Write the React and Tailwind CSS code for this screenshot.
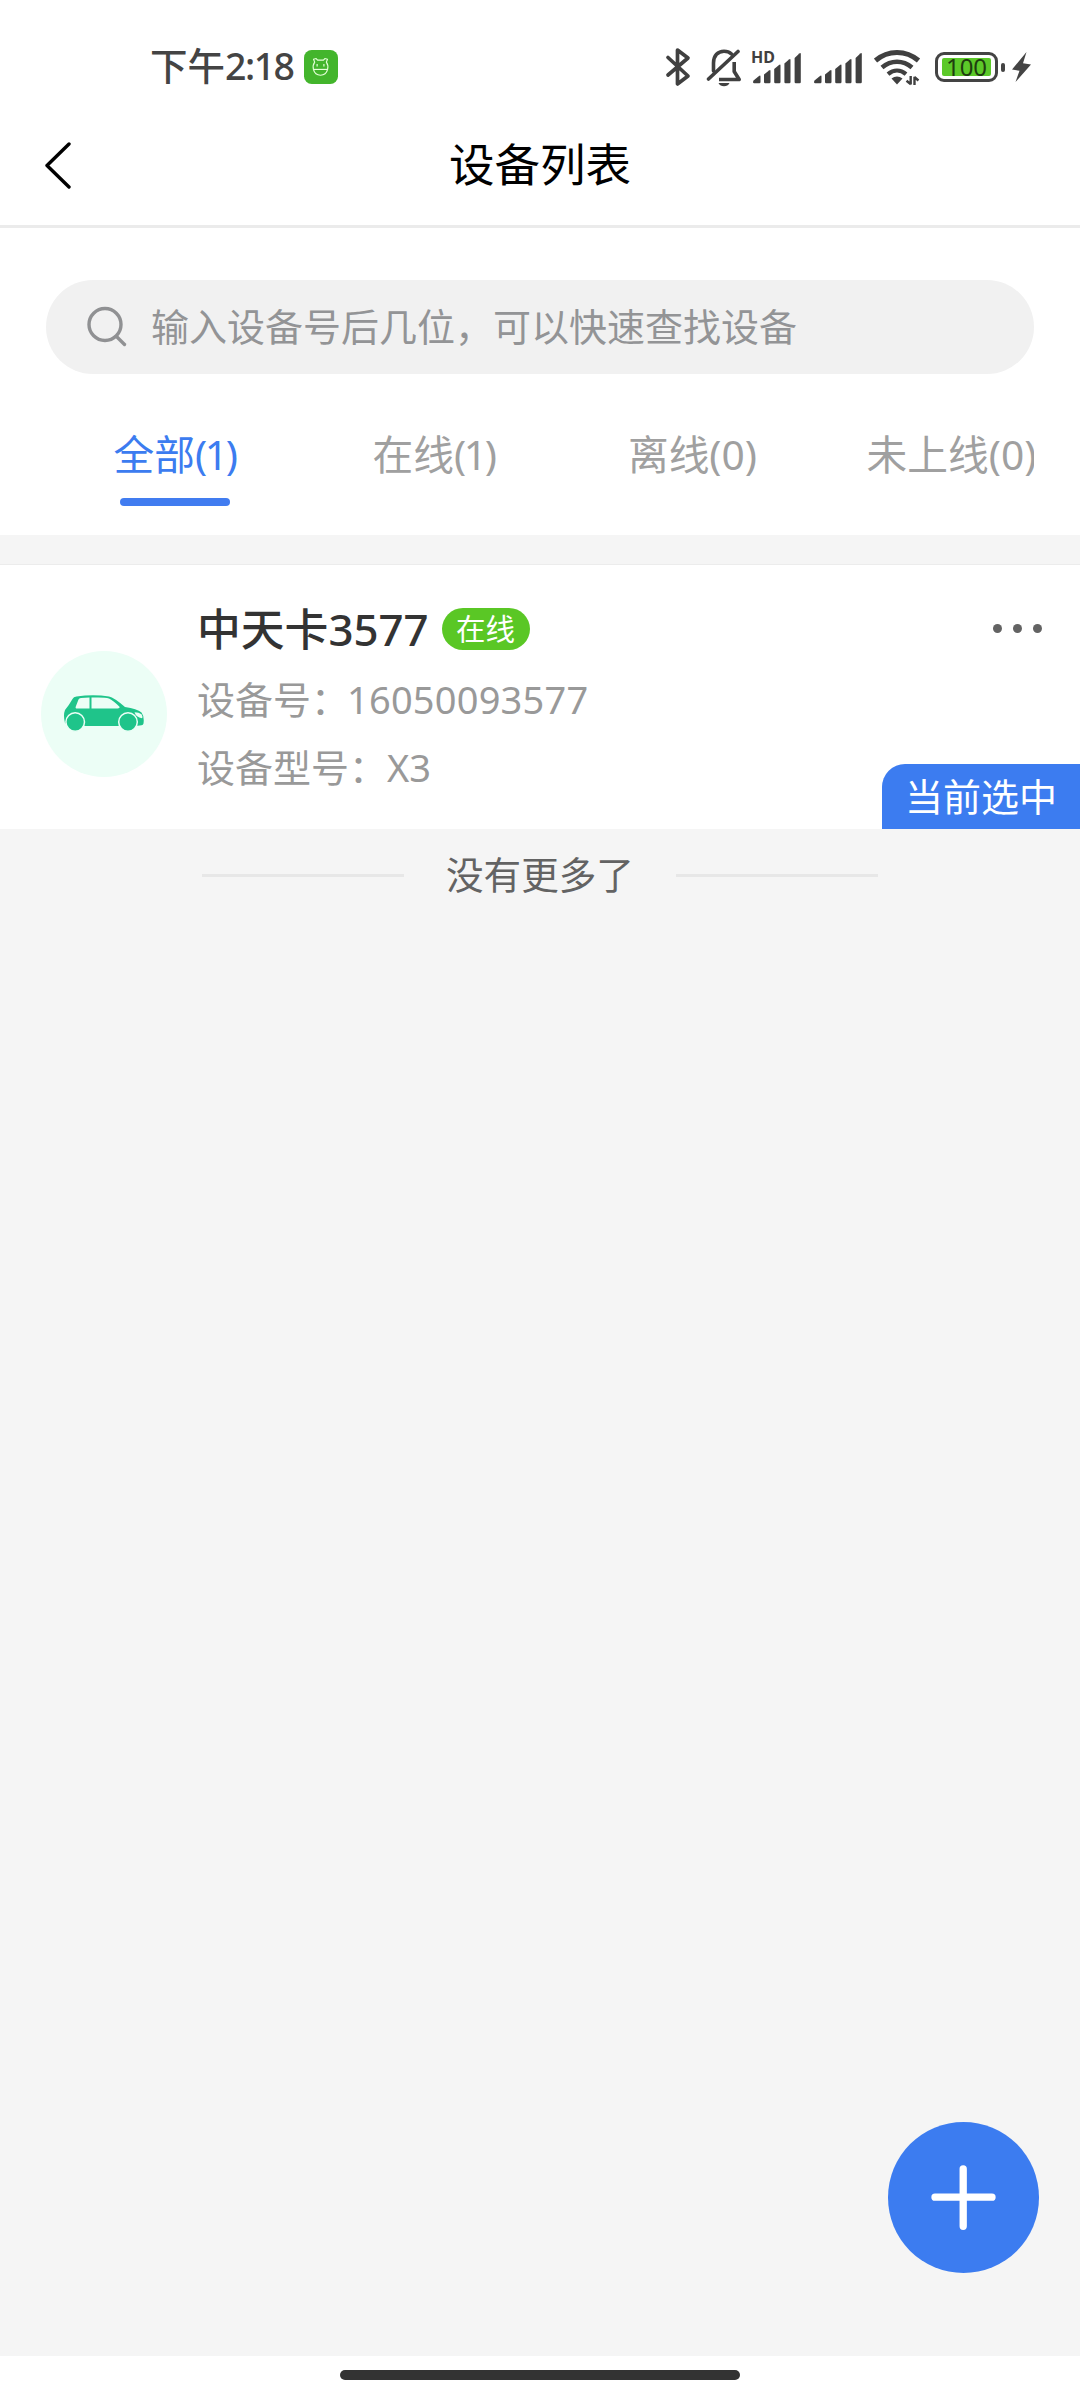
import React from "react";

const cls = (...a) => a.filter(Boolean).join(" ");

const TABS = [
  { key: "all", label: "全部", count: 1 },
  { key: "online", label: "在线", count: 1 },
  { key: "offline", label: "离线", count: 0 },
  { key: "inactive", label: "未上线", count: 0 },
];

const DEVICES = [
  { name: "中天卡3577", status: "在线", number: "16050093577", model: "X3", selected: true },
];

function AppBadge() {
  return (
    <svg width="34" height="34" viewBox="0 0 35 35" fill="none">
      <rect width="35" height="35" rx="8" fill="#43b52c" />
      <g stroke="#e6ffd9" strokeWidth="1.2" strokeLinejoin="round">
        <path d="M11 12.500 9.800 9.500 12.500 8.800 14 10.500h6l1.500-1.700 2.700.7L23 12.500c1.500 2 2 4.500 1.300 7.500-1 3.800-3.600 6-7.300 6s-6.300-2.200-7.300-6c-.7-3-.2-5.500 1.300-7.500Z" />
        <path d="M9.700 20h14.600" />
        <path d="M13.500 14.500v2.500M20.500 14.500v2.500" />
      </g>
    </svg>
  );
}

function BluetoothIcon() {
  return (
    <svg width="26" height="40" viewBox="0 0 26 40" fill="none" stroke="#404040" strokeWidth="3.700" strokeLinecap="round" strokeLinejoin="round">
      <path d="M3 10.500 23 29 12.500 37V3L23 11 3 28" />
    </svg>
  );
}

function MutedBellIcon() {
  return (
    <svg width="36" height="40" viewBox="0 0 36 40" fill="none" stroke="#404040" strokeWidth="3.600" strokeLinecap="round" strokeLinejoin="round">
      <path d="M7.500 24V16C7.500 8.500 12 4.200 18 4.200c3 0 5.600 1 7.500 2.800" />
      <path d="M2.500 32 32 4.500" />
      <path d="M28.200 15v9.500l5 8H13" strokeLinecap="butt" />
      <path d="M12.500 36h11c-1 2.200-3 3.300-5.500 3.300s-4.500-1.100-5.500-3.300Z" fill="#404040" stroke="none" />
    </svg>
  );
}

function SignalIcon() {
  return (
    <svg width="49" height="40" viewBox="0 0 49 40" fill="#404040">
      <path d="M.5 33.500 6 29q1.500-1 1.500.5V35q0 1.200-1.200 1.200H1.200Q0 36.200 0 35Z" />
      <path d="M11 27.500 16 23.500q1.500-1 1.500.5v11q0 1.200-1.200 1.200h-4.100Q11 36.200 11 35Z" />
      <path d="M21.200 22 26 18q1.500-1 1.500.5V35q0 1.200-1.200 1.200h-3.900q-1.200 0-1.200-1.200Z" />
      <path d="M31.400 16.500 36 12.500q1.500-1 1.500.5v22q0 1.200-1.200 1.200h-3.700q-1.200 0-1.200-1.200Z" />
      <path d="M41.600 11 46.300 6.500q1.500-1 1.500.5v28q0 1.200-1.200 1.200h-3.800q-1.200 0-1.200-1.200Z" />
    </svg>
  );
}

function WifiIcon() {
  return (
    <svg width="47" height="40" viewBox="0 0 47 40" fill="none" stroke="#404040">
      <path d="M1.500 13.500C14 2.700 32 2.700 44.500 13.500" strokeWidth="5" />
      <path d="M8 20.500c9-7.600 21-7.600 30 0" strokeWidth="4.600" />
      <path d="M14 27.200c5.500-4.700 12.500-4.700 18 0" strokeWidth="4.200" />
      <path d="M17.500 31.500c3.500-2.700 7.500-2.700 11 0L23 37.500Z" fill="#404040" stroke="none" />
      <path d="M36.700 29v8.500M36.900 37.200l-4.400-3.500M40.500 38V29.800M40.300 30l4.200 3.500" strokeWidth="2.400" />
    </svg>
  );
}

function BatteryIcon({ level }) {
  return (
    <div className="flex items-center gap-[3px]">
      <div className="flex h-[30px] w-[63px] items-center justify-center rounded-[9px] border-[3px] border-[#444]">
        <div className="flex h-[18px] w-[49px] items-center justify-center rounded-[2px] bg-[#5cc929] text-[24px] leading-[18px] text-[#1f3d10]">
          {level}
        </div>
      </div>
      <div className="h-[9px] w-1 rounded-[2px] bg-[#444]" />
    </div>
  );
}

function StatusBar() {
  return (
    <div className="flex h-[105px] items-start pt-[47px] pr-[48px] pl-[150px]">
      <div className="flex h-[38px] items-center text-[37.5px] leading-[38px] font-medium text-[#444]">
        <span>下午</span>
        <span className="tracking-[-1.5px]">2:18</span>
      </div>
      <div className="ml-auto flex h-10 flex-1 items-center pl-[10px]"><AppBadge /></div>
      <div className="flex h-10 items-start">
        <BluetoothIcon />
        <div className="ml-[15px]"><MutedBellIcon /></div>
        <div className="relative ml-[11px]">
          <SignalIcon />
          <span className="absolute top-[2px] -left-[2px] text-[16px] leading-4 font-bold text-[#404040]">HD</span>
        </div>
        <div className="ml-[12px]"><SignalIcon /></div>
        <div className="ml-[11px]"><WifiIcon /></div>
        <div className="mt-[5px] ml-[14px]"><BatteryIcon level={100} /></div>
        <svg className="ml-[6px]" width="21" height="40" viewBox="0 0 21 40" fill="#444">
          <path d="M15.500 5 1 22.500l7.500 1.200L4.500 35 20 17.500l-8-1.200Z" />
        </svg>
      </div>
    </div>
  );
}

function Header({ title }) {
  return (
    <header className="grid h-[123px] grid-cols-[120px_1fr_120px] items-center border-b-[3px] border-[#ebebeb]">
      <button className="pb-px pl-[43px]">
        <svg width="30" height="48" viewBox="0 0 30 48" fill="none" stroke="#000" strokeWidth="3.400" strokeLinecap="round" strokeLinejoin="round">
          <path d="M26 3 4 24.500 26 46" />
        </svg>
      </button>
      <h1 className="pb-[3px] text-center text-[45.5px] leading-[60px] text-black">{title}</h1>
    </header>
  );
}

function SearchBox() {
  return (
    <div className="mx-[46px] mt-[52px] flex h-[94px] items-center rounded-full bg-[#f1f1f1] pl-[40px]">
      <svg width="42" height="42" viewBox="0 0 42 42" fill="none" stroke="#909193" strokeWidth="3.400" strokeLinecap="round">
        <circle cx="19" cy="18.500" r="16" />
        <path d="m30.500 30.500 8 8" />
      </svg>
      <span className="ml-[23px] pb-[3px] text-[38px] leading-[50px] text-[#939496]">输入设备号后几位，可以快速查找设备</span>
    </div>
  );
}

function Tabs({ active, onChange }) {
  return (
    <nav className="mr-[46px] ml-[45px] flex h-[161px] overflow-hidden pt-[52px]">
      {TABS.map((t) => (
        <button key={t.key} onClick={() => onChange(t.key)} className="flex w-[259px] shrink-0 flex-col items-center">
          <span className={cls("text-[40.7px] leading-[56px] whitespace-nowrap", active === t.key ? "text-[#3c7cf0]" : "text-[#a0a0a0]")}>
            {t.label}
            <span className={t.count === 1 ? "tracking-[-2.4px]" : ""}>({t.count})</span>
          </span>
          {active === t.key && <span className="mt-[16px] h-[8px] w-[110px] rounded-full bg-[#417cf0]" />}
        </button>
      ))}
    </nav>
  );
}

function CarIcon() {
  return (
    <svg width="82" height="38" viewBox="0 0 82 38">
      <path d="M9.500 4Q10.500 1.700 13.500 1.400 31-.8 46 1.500q5 1 16 10.500 12 1.500 16.500 5.500 3 4 2 11-.3 1.500-2 1.800l-5.500.7H7l-5-3Q0 20 2 15 5.500 11 9.500 4Z" fill="#1fc48a" />
      <path d="M15.500 4.500Q16 3.200 18 3L26.500 2.600V13.500H14q-2 0-1.200-2ZM28.500 2.600Q41 2 46 3.500q4 1.800 10.500 8.300.5 1.700-2 1.700H28.500Z" fill="#ecfef6" />
      <path d="M71.500 17.300q4.500 0 7 2 1.500 2.500.5 4-6-1-7.500-6Z" fill="#ecfef6" />
      <circle cx="12.200" cy="27" r="9.300" fill="#1fc48a" stroke="#ecfef6" strokeWidth="1.500" />
      <circle cx="65" cy="27" r="9.300" fill="#1fc48a" stroke="#ecfef6" strokeWidth="1.500" />
    </svg>
  );
}

function DeviceCard({ device }) {
  return (
    <section className="relative flex h-[264px] bg-white pl-[41px]">
      <div className="mt-[86px] flex h-[126px] w-[126px] shrink-0 items-center justify-center rounded-full bg-[#ecfef6]">
        <CarIcon />
      </div>
      <div className="ml-[30px] flex-1 pt-[34px]">
        <div className="flex h-[60px] items-center">
          <h2 className="pb-px text-[43.8px] leading-[60px] font-medium text-[#333]">{device.name}</h2>
          <span className="ml-[13px] flex h-[42px] w-[88px] items-center justify-center rounded-full bg-[#5ac725] pb-px text-[29.5px] leading-[41px] text-white">
            {device.status}
          </span>
        </div>
        <p className="mt-[15px] text-[38px] leading-[50px] text-[#999]">
          设备号：<span className="-ml-[2px] tracking-[0.2px]">{device.number}</span>
        </p>
        <p className="mt-[18px] text-[38px] leading-[50px] text-[#999]">设备型号：{device.model}</p>
      </div>
      <button className="mt-[59px] mr-[38px] flex h-[9px] gap-[11px]">
        <span className="h-[9px] w-[9px] rounded-full bg-[#636363]" />
        <span className="h-[9px] w-[9px] rounded-full bg-[#636363]" />
        <span className="h-[9px] w-[9px] rounded-full bg-[#636363]" />
      </button>
      {device.selected && (
        <span className="absolute right-0 bottom-0 flex h-[65px] w-[198px] items-center rounded-tl-[23px] bg-[#3c7cf0] pl-[23px] text-[38px] leading-[63px] text-white">
          当前选中
        </span>
      )}
    </section>
  );
}

export default function DeviceListPage() {
  const [tab, setTab] = React.useState("all");

  return (
    <div className="flex h-[2400px] w-[1080px] flex-col overflow-hidden bg-white font-['Noto_Sans','Noto_Sans_CJK_SC',sans-serif]">
      <StatusBar />
      <Header title="设备列表" />
      <SearchBox />
      <Tabs active={tab} onChange={setTab} />

      <main className="relative flex-1 bg-[#f5f5f5]">
        <div className="h-[30px] border-b border-[#ececec]" />
        {DEVICES.map((d) => (
          <DeviceCard key={d.number} device={d} />
        ))}
        <div className="flex h-[93px] items-center justify-center">
          <span className="h-[3px] w-[202px] bg-[#e7e7e7]" />
          <span className="w-[272px] pb-px text-center text-[37.6px] leading-[50px] text-[#636363]">没有更多了</span>
          <span className="h-[3px] w-[202px] bg-[#e7e7e7]" />
        </div>

        <button className="absolute right-[41px] bottom-[83px] flex h-[151px] w-[151px] items-center justify-center rounded-full bg-[#3c7cf0]">
          <svg width="66" height="66" viewBox="0 0 66 66" stroke="#fff" strokeWidth="7.300" strokeLinecap="round">
            <path d="M32.200 3.800v57.500M4 32.200h57" />
          </svg>
        </button>
      </main>

      <footer className="flex h-[44px] shrink-0 justify-center bg-white pt-[14px]">
        <div className="h-[10px] w-[400px] rounded-full bg-[#333]" />
      </footer>
    </div>
  );
}
